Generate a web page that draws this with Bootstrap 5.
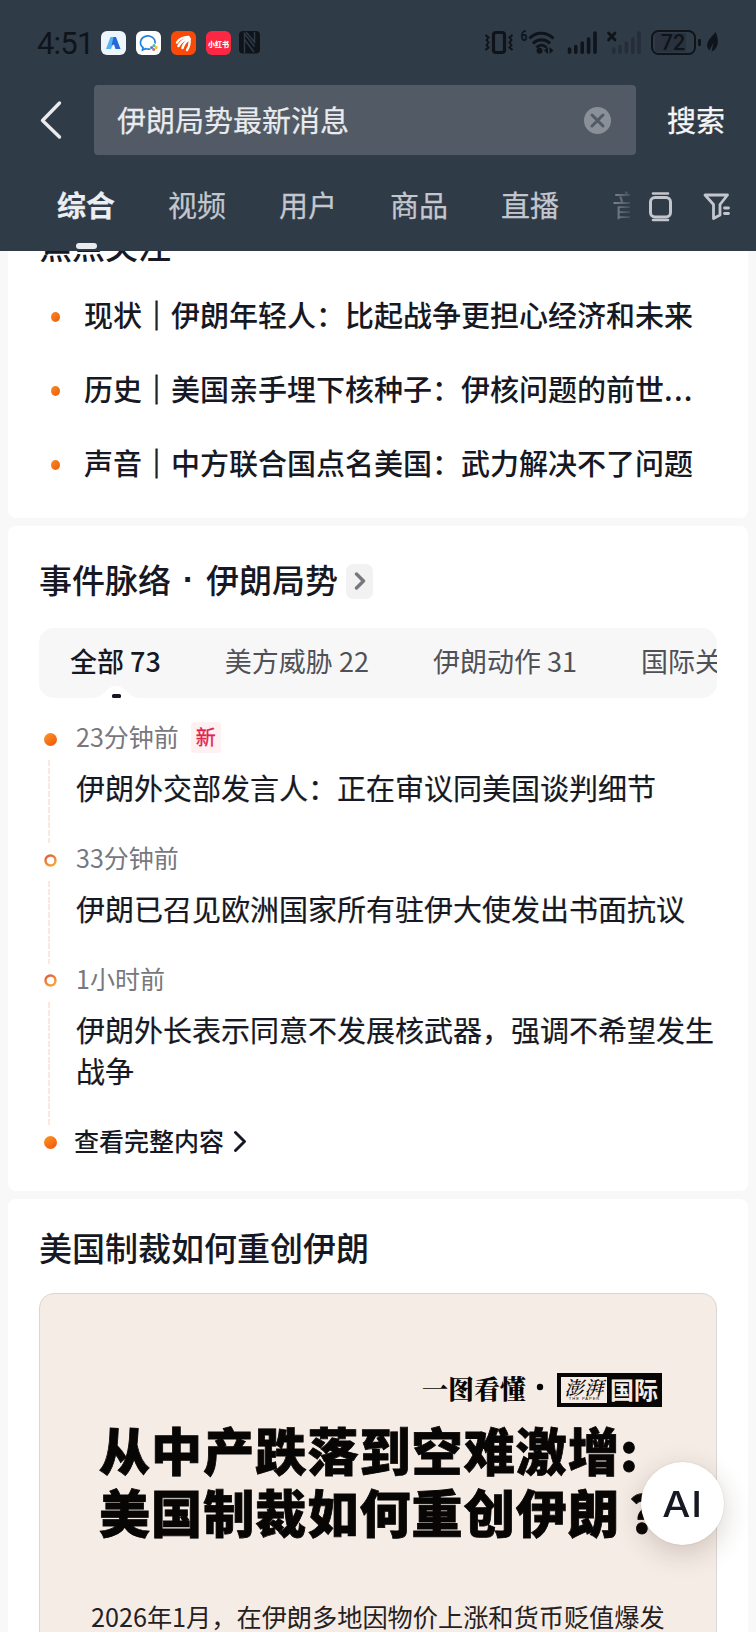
<!DOCTYPE html>
<html lang="zh-CN">
<head>
<meta charset="utf-8">
<meta name="viewport" content="width=device-width, initial-scale=1">
<title>伊朗局势最新消息</title>
<link href="https://cdn.jsdelivr.net/npm/bootstrap@5.3.0/dist/css/bootstrap.min.css" rel="stylesheet">
<style>
  body { font-family: "Noto Sans CJK SC", sans-serif; background: #f8f8f8; color: #161823; width: 756px; height: 1632px; overflow: hidden; }
  svg { display: block; flex: none; }
  .top-area { background: #303b48; height: 251px; z-index: 5; color: #e9ebee; }
  .status-row { height: 85px; padding: 28px 0 0 37px; color: #0f141b; }
  .clock { font: 400 31px/31px Roboto, sans-serif; letter-spacing: -.8px; width: 64px; white-space: nowrap; }
  .search-row { height: 70px; padding-left: 38px; }
  .search-box { width: 542px; height: 70px; margin-left: 30px; padding: 0 25px 0 23px; background: #515a65; border-radius: 4px; font-size: 29px; line-height: 65px; -webkit-text-stroke: .25px; }
  .search-box span { margin-top: -2px; }
  .search-go { font-size: 29px; line-height: 69px; margin-left: 31px; color: #f5f6f7; -webkit-text-stroke: .3px; }
  .tab-row { padding: 29px 0 0 57px; height: 96px; }
  .tab-strip { width: 573px; gap: 53px; overflow: hidden; font-size: 29px; line-height: 41px; color: #c3c7cd; white-space: nowrap; height: 67px; -webkit-text-stroke: .25px; }
  .tab-strip .on { color: #eceef1; font-weight: 700; }
  .tab-strip .on i { left: 19px; top: 59px; width: 21px; height: 6px; border-radius: 3px; background: #e9ebee; }
  .fade-tab { background: linear-gradient(90deg, #838a94, #303b48 24px); -webkit-background-clip: text; background-clip: text; color: transparent; -webkit-text-stroke: 0; }
  .panel { background: #fff; border-radius: 8px; margin: 0 8px 8px; padding: 0 31px; }
  .panel-title { font-size: 33px; font-weight: 500; line-height: 49px; height: 48px; }
  .mid-dot { width: 35px; font-weight: 700; font-family: "Liberation Sans", sans-serif; text-align: center; }
  .focus-panel { margin-top: -30px; height: 297px; }
  .focus-list { margin-top: 8px; font-size: 29px; font-weight: 500; }
  .focus-list li { height: 74px; line-height: 74px; padding-left: 12px; white-space: nowrap; }
  .focus-list b { font-weight: 500; -webkit-text-stroke: .8px; }
  .bullet { width: 9px; height: 10px; border-radius: 50%; margin-top: 5px; margin-right: 24px; background: linear-gradient(135deg, #f58e22, #f1580c); }
  .event-panel { height: 665px; padding-top: 37px; }
  .more-btn { width: 27px; height: 35px; border-radius: 7px; background: #f2f2f2; margin-left: 8px; }
  .chips { height: 70px; margin-top: 29px; padding-left: 31px; padding-bottom: 3px; background: #f7f7f7; border-radius: 15px; font-size: 27px; color: #505157; overflow: hidden; white-space: nowrap; gap: 64px; }
  .chips .on { color: #161823; font-weight: 500; margin-top: -1px; }
  .notch { left: 52px; bottom: 0; }
  .timeline { margin-top: 22px; }
  .rail { width: 37px; }
  .dot-full { width: 13px; height: 13px; border-radius: 50%; background: linear-gradient(145deg, #f99a25, #f4500a); margin: 13px 0 0 5px; }
  .dashes { width: 2px; margin-left: 9px; margin-top: 14px; margin-bottom: -2px; background: repeating-linear-gradient(#fbe9e0 0 6px, #fff 6px 7.8px); }
  .when { font-size: 25px; line-height: 32px; height: 34px; padding-bottom: 2px; color: #77787e; }
  .what { font-size: 29px; line-height: 40.6px; margin-top: 13px; padding-bottom: 33.4px; margin-right: -5px; -webkit-text-stroke: .2px; }
  .tag-new { font-size: 20px; line-height: 29px; width: 30px; height: 31px; border-radius: 4px; background: #fff0f2; color: #df2450; margin-left: 12px; margin-top: 2px; text-align: center; -webkit-text-stroke: .3px; }
  .see-all { font-size: 25px; font-weight: 500; line-height: 32px; height: 32px; margin-left: -2px; }
  .story-panel { padding-top: 24px; height: 450px; }
  .poster { margin-top: 22px; height: 400px; border: 1px solid #d9d6d4; border-radius: 15px 15px 0 0; background: #f5ece6; color: #080605; padding: 79px 0 0 51px; white-space: nowrap; }
  .brand-row { height: 34px; margin-right: 54px; font-family: "Noto Serif CJK SC", "Noto Sans CJK SC", serif; font-weight: 900; font-size: 26px; line-height: 30px; }
  .brand { background: #080605; width: 105px; height: 34px; margin-left: 13px; padding: 4px; font-family: "Noto Sans CJK SC", sans-serif; color: #f5ece6; font-size: 24px; line-height: 23px; font-weight: 700; }
  .brand-mark { background: #f5ece6; color: #080605; width: 46px; height: 26px; padding-left: 1px; font: italic 500 19px/19px "Noto Serif CJK SC", "Noto Sans CJK SC", serif; margin-right: 3px; letter-spacing: 1px; text-align: center; }
  .brand-sub { font: 4px/4px "Liberation Sans", sans-serif; letter-spacing: 1px; margin-top: 1px; }
  .headline { font-size: 51px; letter-spacing: 1.1px; font-weight: 900; line-height: 62.3px; margin: 11px 0 0 8px; -webkit-text-stroke: .8px #080605; }
  .headline b { font-weight: 900; margin-left: 9px; }
  .lead-in { font-size: 25.2px; line-height: 40px; margin-top: 53px; color: #26211e; }
  .ai-fab { left: 641px; top: 1462px; width: 83px; height: 83px; border-radius: 50%; background: #fff; z-index: 6; box-shadow: 0 8px 28px rgba(60, 35, 15, .2), 0 0 2px rgba(0, 0, 0, .12); font: 500 36px/84px Inter, sans-serif; letter-spacing: 1px; color: #161823; }
  .ai-fab span { display: inline-block; transform: scaleX(1.1); }
</style>
</head>
<body>
<header class="top-area position-relative">
  <div class="status-row d-flex">
    <span class="clock">4:51</span>
    <svg width="25" height="25" viewBox="0 0 25 25" style="margin-top:3px"><rect width="25" height="24" rx="6" fill="#edf5fd"/><path d="M9.500 6H15L10 18H5z" fill="#55b4f4"/><path d="M12.500 6H15l4.500 12h-5L13 13.500l-2.500 1z" fill="#2467d8"/></svg>
    <svg class="ms-2" width="27" height="25" viewBox="-2 0 27 25" style="margin-top:3px"><rect width="25" height="24" rx="6" fill="#fff"/><path d="M19 12.500a7.300 6.600 0 1 0-12 4l-.5 2.500 3-1.300q2 .7 5 .3" fill="none" stroke="#2281df" stroke-width="1.700"/><circle cx="18" cy="14.500" r="1.500" fill="#53bf78"/><circle cx="20.200" cy="16.500" r="1.500" fill="#f7ba2a"/><circle cx="17.700" cy="18.600" r="1.500" fill="#ee6545"/><circle cx="15.700" cy="16.500" r="1.500" fill="#3d7fe0"/></svg>
    <svg class="ms-2" width="27" height="25" viewBox="-2 0 27 25" style="margin-top:3px"><rect width="25" height="24" rx="6" fill="#fa4a08"/><g fill="none" stroke="#fff" stroke-linecap="round"><path d="M6 11.500C8 8 12 6.200 17.500 6" stroke-width="2.400"/><path d="M7.500 15c2-4 6-6.500 10.500-8" stroke-width="2.600"/><path d="M11.500 17c1-4 4-7 7-9" stroke-width="2.600"/><path d="M16 19c2-3 3-7 2.500-11" stroke-width="2.400"/></g></svg>
    <svg class="ms-2" width="27" height="25" viewBox="-2 0 27 25" style="margin-top:3px"><rect width="25" height="24" rx="6" fill="#fc2743"/><text x="12.500" y="15.500" font-size="7" font-weight="900" fill="#fff" text-anchor="middle">小红书</text></svg>
    <svg class="ms-2" width="21" height="23" viewBox="0 0 21 23" style="margin-top:3px"><rect width="21" height="22.500" rx="4" fill="#0f141b"/><path d="M5.500 22V2.500l10 13M5.500 8.500l9.500 12.500M7 1l8.500 10V1" fill="none" stroke="#303b48" stroke-width="1.400"/></svg>
    <svg style="margin-left:225px" width="28" height="30" viewBox="485 28 28 30" fill="none" stroke="currentColor"><rect x="493.500" y="32.500" width="11" height="20" rx="2.500" stroke-width="3.200"/><path d="M485.500 35l3 2.500-2 2.500 2 2.500-2 2.500 2 2.500-3 2.500M512.500 35l-3 2.500 2 2.500-2 2.500 2 2.500-2 2.500 3 2.500" stroke-width="2"/></svg>
    <svg style="margin-left:7px" width="36" height="30" viewBox="520 28 36 30" fill="none" stroke="currentColor" stroke-width="3"><path d="M529.500 38.500c6-7 17-7 24 0M533 43.500c5-5 12-5 17 0M536.500 47.500c3-3 7-3 10 0" /><circle cx="539.500" cy="50.700" r="3" fill="currentColor" stroke="none"/><path d="M548 47v7l-4-3.500zM549.500 47v7l4-3.500z" fill="currentColor" stroke="none"/><text x="520.500" y="41" font-size="14" font-weight="700" font-family="Roboto" fill="currentColor" stroke="none" textLength="7" lengthAdjust="spacingAndGlyphs">6</text></svg>
    <svg style="margin-left:11px" width="32" height="30" viewBox="567 28 32 30" stroke="currentColor" stroke-width="3.600" stroke-linecap="round"><path d="M569.500 49v3.200M575.800 46.500v5.700M582.200 43v9.200M588.600 39v13.200M595 33v19.200"/></svg>
    <svg style="margin-left:7px" width="36" height="30" viewBox="606 28 36 30" stroke="currentColor" stroke-width="3.600" stroke-linecap="round"><path opacity=".35" d="M613.800 49v3.200M620 46.500v5.700M626.400 43v9.200M632.800 39v13.200M639 33v19.200"/><path d="M608.500 33l6.500 7M615 33l-6.500 7" stroke-width="2.800"/></svg>
    <svg style="margin-left:8px" width="52" height="30" viewBox="650 28 52 30"><rect x="652" y="31" width="43" height="23" rx="6.500" fill="none" stroke="currentColor" stroke-width="2"/><path d="M655 36q0-3 3-3h28v19h-28q-3 0-3-3z" fill="#29323d"/><rect x="698" y="39" width="3" height="7" rx="1" fill="currentColor"/><text x="673" y="50" font-size="21.500" font-weight="500" font-family="Roboto" text-anchor="middle" fill="currentColor">72</text></svg>
    <svg style="margin-left:3px" width="14" height="30" viewBox="705 28 14 30"><path d="M715.500 32c4 8 3 17-4 19.500l2-9-4 8c-7-7 3-14 6-18.500z" fill="currentColor"/></svg>
  </div>
  <div class="search-row d-flex">
    <svg class="my-auto" width="26" height="40" viewBox="0 0 26 40" fill="none" stroke="#e9ebee" stroke-width="3.400" stroke-linecap="round" stroke-linejoin="round"><path d="M21.500 3 4.500 20.500 21.500 37"/></svg>
    <div class="search-box d-flex justify-content-between align-items-center"><span>伊朗局势最新消息</span>
      <svg width="27" height="27" viewBox="0 0 27 27"><circle cx="13.500" cy="13.500" r="13.500" fill="#8a9098"/><path d="M8 8l11 11M19 8 8 19" stroke="#515a65" stroke-width="3" stroke-linecap="round"/></svg>
    </div>
    <span class="search-go">搜索</span>
  </div>
  <nav class="tab-row d-flex">
    <div class="tab-strip d-flex">
      <span class="on position-relative">综合<i class="position-absolute"></i></span><span>视频</span><span>用户</span><span>商品</span><span>直播</span><span class="fade-tab">音</span>
    </div>
    <svg style="margin:7px 0 0 18px" width="26" height="32" viewBox="0 0 26 32" fill="none" stroke="#c3c7cd" stroke-width="3" stroke-linecap="round"><rect x="2.500" y="6.500" width="20" height="19.500" rx="4.500"/><path d="M5 2.500h15M5 29h15" stroke-width="2.600"/></svg>
    <svg style="margin:7px 0 0 29px" width="28" height="32" viewBox="0 0 28 32" fill="none" stroke="#c3c7cd" stroke-width="2.800" stroke-linecap="round" stroke-linejoin="round"><path d="M2 4h22.500l-7.500 9.500V24l-6.500 3.500V13.500zM21.500 17h4M21.500 22.500h4"/></svg>
  </nav>
</header>

<main>
  <section class="panel focus-panel">
    <div class="panel-title">焦点关注</div>
    <ul class="focus-list list-unstyled mb-0">
      <li class="d-flex align-items-center"><i class="bullet"></i>现状<b>｜</b>伊朗年轻人：比起战争更担心经济和未来</li>
      <li class="d-flex align-items-center"><i class="bullet"></i>历史<b>｜</b>美国亲手埋下核种子：伊核问题的前世<span style="letter-spacing:1.2px">...</span></li>
      <li class="d-flex align-items-center"><i class="bullet"></i>声音<b>｜</b>中方联合国点名美国：武力解决不了问题</li>
    </ul>
  </section>

  <section class="panel event-panel">
    <div class="d-flex align-items-center" style="height:36px">
      <span class="panel-title d-flex" style="margin-top:-5px">事件脉络<span class="mid-dot">·</span>伊朗局势</span>
      <span class="more-btn d-flex align-items-center justify-content-center"><svg width="12" height="18" viewBox="0 0 12 18" fill="none" stroke="#77787e" stroke-width="3.400" stroke-linecap="round" stroke-linejoin="round"><path d="M2.500 2 9.500 9l-7 7"/></svg></span>
    </div>
    <div class="chips d-flex align-items-center position-relative">
      <svg class="notch position-absolute" width="50" height="12" viewBox="0 0 50 12"><path d="M0 12C14 12 15 0 25 0s12 12 25 12z" fill="#fff"/><rect x="21" y="8" width="9" height="4" rx="1.500" fill="#161823"/></svg>
      <span class="on">全部 73</span><span>美方威胁 22</span><span>伊朗动作 31</span><span>国际关</span>
    </div>
    <div class="timeline">
      <div class="d-flex">
        <div class="rail d-flex flex-column flex-shrink-0"><i class="dot-full"></i><i class="dashes flex-grow-1"></i></div>
        <div><div class="when d-flex align-items-center">23分钟前<span class="tag-new">新</span></div><div class="what">伊朗外交部发言人：正在审议同美国谈判细节</div></div>
      </div>
      <div class="d-flex">
        <div class="rail d-flex flex-column flex-shrink-0"><svg style="margin:13px 0 0 5px" width="13" height="13" viewBox="0 0 13 13"><defs><linearGradient id="ring" x1="0" y1="0" x2=".6" y2="1"><stop stop-color="#dc5c3c"/><stop offset="1" stop-color="#f3a23c"/></linearGradient></defs><circle cx="6.500" cy="6.500" r="5" fill="#fff" stroke="url(#ring)" stroke-width="2.400"/></svg><i class="dashes flex-grow-1"></i></div>
        <div><div class="when">33分钟前</div><div class="what">伊朗已召见欧洲国家所有驻伊大使发出书面抗议</div></div>
      </div>
      <div class="d-flex">
        <div class="rail d-flex flex-column flex-shrink-0"><svg style="margin:12px 0 1px 5px" width="13" height="13" viewBox="0 0 13 13"><circle cx="6.500" cy="6.500" r="5" fill="#fff" stroke="url(#ring)" stroke-width="2.400"/></svg><i class="dashes flex-grow-1"></i></div>
        <div><div class="when">1小时前</div><div class="what">伊朗外长表示同意不发展核武器，强调不希望发生<br>战争</div></div>
      </div>
      <div class="d-flex">
        <div class="rail flex-shrink-0"><i class="dot-full d-block" style="margin-top:12px"></i></div>
        <div class="see-all d-flex align-items-center">查看完整内容<svg style="margin:3px 0 0 8px" width="15" height="22" viewBox="0 0 15 22" fill="none" stroke="#161823" stroke-width="2.900" stroke-linecap="round" stroke-linejoin="round"><path d="M3.500 2.500l9 9-9 9"/></svg></div>
      </div>
    </div>
  </section>

  <section class="panel story-panel">
    <div class="panel-title">美国制裁如何重创伊朗</div>
    <div class="poster">
      <div class="brand-row d-flex justify-content-end">
        <span>一图看懂</span><svg style="margin:10px 0 0 10px" width="8" height="8"><circle cx="4" cy="4" r="3.200" fill="#080605"/></svg>
        <div class="brand d-flex"><div class="brand-mark">澎湃<div class="brand-sub">THE PAPER</div></div>国际</div>
      </div>
      <div class="headline">从中产跌落到空难激增:<br>美国制裁如何重创伊朗<b>?</b></div>
      <div class="lead-in">2026年1月，在伊朗多地因物价上涨和货币贬值爆发</div>
    </div>
  </section>
</main>
<button class="ai-fab position-absolute border-0 p-0 text-center" type="button"><span>AI</span></button>
<script src="https://cdn.jsdelivr.net/npm/bootstrap@5.3.0/dist/js/bootstrap.bundle.min.js"></script>
</body>
</html>
